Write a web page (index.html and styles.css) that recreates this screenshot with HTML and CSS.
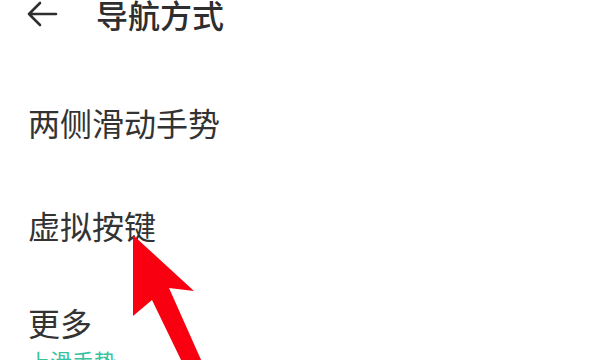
FILE: index.html
```html
<!DOCTYPE html>
<html lang="zh-CN">
<head>
<meta charset="utf-8">
<link rel="stylesheet" href="styles.css">
</head>
<body>
<div class="screen">
  <header class="topbar">
    <svg class="back" width="32" height="28" viewBox="0 0 32 28">
      <path d="M30 14 H3 M14 3 L3 14 L14 25" fill="none" stroke="#2e2e2e" stroke-width="2.6" stroke-linecap="round" stroke-linejoin="round"/>
    </svg>
    <h1 class="title">导航方式</h1>
  </header>
  <ul class="options">
    <li class="option">两侧滑动手势</li>
    <li class="option">虚拟按键</li>
    <li class="option more">更多
      <span class="sub">上滑手势</span>
    </li>
  </ul>
  <svg class="pointer" width="597" height="360" viewBox="0 0 597 360">
    <polygon points="133,235 194,291 169,288 202,362 182,362 152,300 133,316" fill="#f8000f"/>
  </svg>
</div>
</body>
</html>
```
FILE: styles.css
```css
html, body {
  margin: 0;
  padding: 0;
  background: #ffffff;
}
.screen {
  position: relative;
  width: 597px;
  height: 360px;
  overflow: hidden;
  font-family: "Noto Sans CJK SC", "Noto Sans", sans-serif;
  color: #333333;
}
.topbar {
  display: flex;
  align-items: center;
  height: 28px;
  padding-left: 26px;
}
.back {
  display: block;
  flex: none;
}
.title {
  margin: 0 0 0 38px;
  font-size: 32px;
  font-weight: 500;
  line-height: 32px;
  color: #2e2e2e;
}
.options {
  list-style: none;
  margin: 0;
  padding: 0 0 0 28px;
  display: flex;
  flex-direction: column;
}
.option {
  font-size: 32px;
  line-height: 32px;
  color: #333333;
}
.option:nth-child(1) { margin-top: 78px; }
.option:nth-child(2) { margin-top: 71px; }
.option:nth-child(3) { margin-top: 65px; }
.more {
  display: flex;
  flex-direction: column;
}
.sub {
  margin-top: 10px;
  font-size: 22px;
  line-height: 24px;
  color: #37c2a0;
}
.pointer {
  position: absolute;
  left: 0;
  top: 0;
  pointer-events: none;
}
```
